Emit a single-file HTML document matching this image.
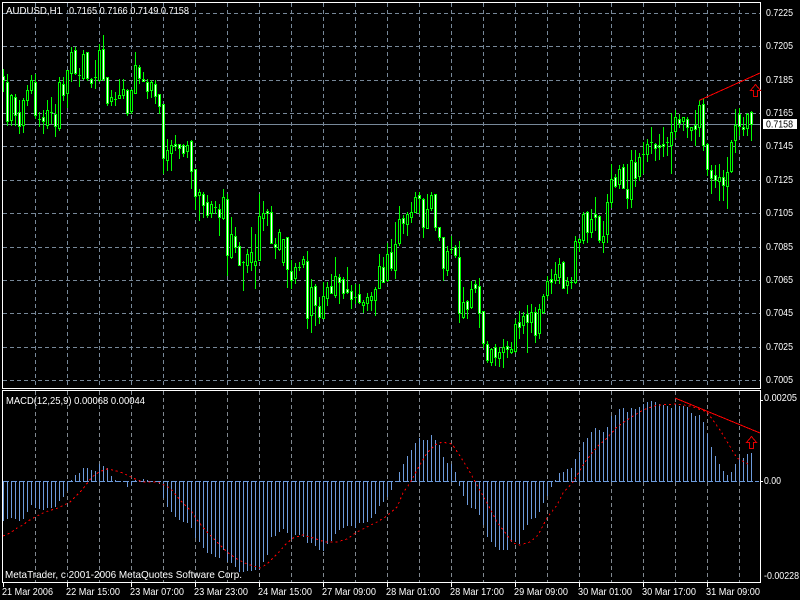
<!DOCTYPE html>
<html><head><meta charset="utf-8"><title>AUDUSD,H1</title>
<style>
html,body{margin:0;padding:0;background:#000;width:800px;height:600px;overflow:hidden}
svg{display:block}
text{font-family:"Liberation Sans",sans-serif;font-size:10.5px;fill:#fff}
</style></head><body>
<svg width="800" height="600" viewBox="0 0 800 600" xmlns="http://www.w3.org/2000/svg">
<rect width="800" height="600" fill="#000"/>
<g shape-rendering="crispEdges" fill="none">
<g stroke="#778899" stroke-dasharray="4 3">
<path transform="translate(0,.5)" d="M3 13H760M3 46H760M3 80H760M3 113H760M3 146H760M3 180H760M3 213H760M3 247H760M3 280H760M3 313H760M3 347H760M3 380H760"/>
<path transform="translate(.5,0)" d="M35 3V388M67 3V388M99 3V388M131 3V388M163 3V388M195 3V388M227 3V388M259 3V388M291 3V388M323 3V388M355 3V388M387 3V388M419 3V388M451 3V388M483 3V388M515 3V388M547 3V388M579 3V388M611 3V388M643 3V388M675 3V388M707 3V388M739 3V388"/>
<path transform="translate(.5,0)" stroke="#808890" d="M35 391V582M67 391V582M99 391V582M131 391V582M163 391V582M195 391V582M227 391V582M259 391V582M291 391V582M323 391V582M355 391V582M387 391V582M419 391V582M451 391V582M483 391V582M515 391V582M547 391V582M579 391V582M611 391V582M643 391V582M675 391V582M707 391V582M739 391V582"/>
</g>
<path transform="translate(0,.5)" stroke="#778899" d="M3 124H760"/>
<g transform="translate(.5,0)">
<path stroke="#00ff00" d="M3 69V92M7 74V126M11 94V126M15 94V126M19 100V134M23 98V133M27 85V106M31 75V94M35 74V119M39 112V127M43 110V134M47 100V129M51 97V124M55 104V137M59 77V131M63 77V101M67 70V108M71 47V82M75 47V75M79 68V87M83 50V80M87 52V81M91 78V88M95 60V89M99 44V82M103 35V81M107 77V106M111 90V106M115 92V106M119 79V99M123 79V99M127 89V116M131 89V114M135 52V94M139 65V84M143 72V82M147 79V99M151 80V98M155 80V104M159 94V114M163 104V174M167 139V171M171 140V171M175 135V151M179 144V159M183 144V157M187 141V158M191 140V189M195 169V210M199 189V221M203 192V218M207 195V218M211 201V218M215 201V214M219 204V236M223 189V220M227 194V276M231 217V259M235 227V253M239 242V266M243 261V291M247 249V273M251 227V271M255 234V289M259 194V261M263 201V231M267 209V226M271 206V244M275 238V259M279 229V251M283 239V266M287 237V288M291 260V289M295 263V284M299 262V271M303 256V268M307 251V329M311 279V333M315 284V326M319 297V324M323 282V319M327 282V306M331 274V294M335 257V298M339 274V304M343 277V299M347 267V294M351 285V309M355 284V304M359 284V304M363 300V313M367 293V311M371 292V311M375 287V316M379 254V289M383 257V283M387 243V282M391 239V271M395 222V279M399 206V246M403 215V234M407 212V236M411 202V223M415 192V213M419 192V214M423 198V238M427 194V229M431 192V211M435 194V231M439 227V241M443 237V281M447 246V276M451 236V254M455 245V258M459 241V323M463 287V319M467 300V319M471 281V309M475 280V293M479 278V328M483 311V348M487 341V363M491 348V366M495 344V366M499 347V367M503 339V368M507 341V358M511 342V354M515 319V353M519 311V339M523 312V334M527 305V353M531 304V333M535 307V343M539 304V339M543 294V314M547 276V299M551 269V294M555 262V284M559 258V284M563 261V289M567 277V294M571 277V289M575 236V284M579 238V252M583 212V244M587 211V243M591 209V238M595 197V231M599 215V243M603 221V253M607 194V243M611 164V208M615 174V188M619 165V189M623 164V189M627 164V209M631 150V208M635 150V187M639 153V181M643 142V174M647 139V162M651 127V154M655 143V161M659 134V160M663 127V157M667 137V156M671 113V174M675 110V138M679 114V128M683 117V131M687 117V138M691 127V141M695 110V146M699 100V137M703 98V151M707 143V176M711 165V194M715 165V188M719 164V201M723 170V201M727 157V209M731 140V173M735 109V153M739 108V136M743 117V136M747 113V136M751 111V141"/>
<path stroke="#00ff00" stroke-width="3" d="M3 76V81M7 82V122M11 95V121M15 97V116M19 112V127M23 100V126M27 90V101M31 80V91M35 82V116M39 119V120M43 117V122M47 110V126M51 112V113M55 114V127M59 82V129M63 84V96M67 70V94M71 52V74M75 50V74M79 75V76M83 54V79M87 52V79M91 79V84M95 77V78M99 50V81M103 49V80M107 77V104M111 97V102M115 99V100M119 95V99M123 89V96M127 90V114M131 90V112M135 65V94M139 67V79M143 79V82M147 82V92M151 82V91M155 84V97M159 94V107M163 104V159M167 150V161M171 145V154M175 144V147M179 144V149M183 145V154M187 145V152M191 141V172M195 169V197M199 192V196M203 194V206M207 202V216M211 204V214M215 207V208M219 209V218M223 197V219M227 199V256M231 234V258M235 236V248M239 246V266M243 262V263M247 254V266M251 252V263M255 261V266M259 216V261M263 213V219M267 211V214M271 212V244M275 244V248M279 232V250M283 239V263M287 237V270M291 271V281M295 267V279M299 267V268M303 259V265M307 261V319M311 287V316M315 286V306M319 306V318M323 296V319M327 287V299M331 286V294M335 276V296M339 277V283M343 279V294M347 289V293M351 291V300M355 297V298M359 294V303M363 302V306M367 297V304M371 296V301M375 289V301M379 266V289M383 267V283M387 254V281M391 252V269M395 244V271M399 219V244M403 218V224M407 214V225M411 212V218M415 197V213M419 195V199M423 199V228M427 209V229M431 195V209M435 194V228M439 227V238M443 237V269M447 251V271M451 249V250M455 247V256M459 257V314M463 302V318M467 301V310M471 289V308M475 284V289M479 286V314M483 311V344M487 344V361M491 349V363M495 347V358M499 352V359M503 347V353M507 346V350M511 349V353M515 324V352M519 322V328M523 316V326M527 314V323M531 312V323M535 312V336M539 309V334M543 296V313M547 281V296M551 279V283M555 274V281M559 264V278M563 262V289M567 281V286M571 282V283M575 241V283M579 239V243M583 214V241M587 212V233M591 219V233M595 214V218M599 216V241M603 236V243M607 202V235M611 179V203M615 177V187M619 169V185M623 167V189M627 189V199M631 160V200M635 162V179M639 157V177M643 154V155M647 144V155M651 142V143M655 144V149M659 145V148M663 144V147M667 142V143M671 132V146M675 117V132M679 119V124M683 117V122M687 119V128M691 127V131M695 125V130M699 105V128M703 104V146M707 144V170M711 170V179M715 175V181M719 177V182M723 177V186M727 172V187M731 142V172M735 125V141M739 114V127M743 127V130M747 114V129M751 112V125"/>
<path stroke="#000" d="M11 96V120M23 101V125M27 91V100M31 81V90M47 111V125M59 83V128M67 71V93M71 53V73M83 55V78M99 51V80M111 98V101M119 96V98M123 90V95M131 91V111M135 66V93M151 83V90M167 151V160M171 146V153M187 146V151M199 193V195M211 205V213M223 198V218M231 235V257M247 255V265M251 253V262M255 262V265M259 217V260M263 214V218M279 233V249M283 240V262M295 268V278M303 260V264M311 288V315M323 297V318M327 288V298M335 277V295M363 303V305M367 298V303M371 297V300M375 290V300M379 267V288M387 255V280M395 245V270M399 220V243M407 215V224M411 213V217M415 198V212M427 210V228M431 196V208M447 252V270M463 303V317M471 290V307M491 350V362M499 353V358M503 348V352M511 350V352M515 325V351M523 317V325M531 313V322M539 310V333M543 297V312M547 282V295M555 275V280M559 265V277M567 282V285M575 242V282M579 240V242M583 215V240M591 220V232M603 237V242M607 203V234M611 180V202M619 170V184M631 161V199M639 158V176M647 145V154M671 133V145M675 118V131M683 118V121M691 128V130M699 106V127M719 178V181M727 173V186M731 143V171M735 126V140M747 115V128"/>
<path stroke="#fff" d="M3 77V80M7 83V121M15 98V115M19 113V126M35 83V115M43 118V121M55 115V126M63 85V95M75 51V73M87 53V78M91 80V83M103 50V79M107 78V103M127 91V113M139 68V78M143 80V81M147 83V91M155 85V96M159 95V106M163 105V158M175 145V146M179 145V148M183 146V153M191 142V171M195 170V196M203 195V205M207 203V215M219 210V217M227 200V255M235 237V247M239 247V265M267 212V213M271 213V243M275 245V247M287 238V269M291 272V280M307 262V318M315 287V305M319 307V317M331 287V293M339 278V282M343 280V293M347 290V292M351 292V299M359 295V302M383 268V282M391 253V268M403 219V223M419 196V198M423 200V227M435 195V227M439 228V237M443 238V268M455 248V255M459 258V313M467 302V309M475 285V288M479 287V313M483 312V343M487 345V360M495 348V357M507 347V349M519 323V327M527 315V322M535 313V335M551 280V282M563 263V288M587 213V232M595 215V217M599 217V240M615 178V186M623 168V188M627 190V198M635 163V178M655 145V148M659 146V147M663 145V146M679 120V123M687 120V127M695 126V129M703 105V145M707 145V169M711 171V178M715 176V180M723 178V185M739 115V126M743 128V129M751 113V124"/>
<path stroke="#6d9bdc" d="M3 481V521M7 481V519M11 481V518M15 481V519M19 481V521M23 481V519M27 481V512M31 481V505M35 481V508M39 481V509M43 481V510M47 481V508M51 481V508M55 481V507M59 481V501M63 481V497M67 481V491M71 480V481M75 475V481M79 473V481M83 468V481M87 468V481M91 470V481M95 471V481M99 464V481M103 466V481M107 468V481M111 476V481M115 480V481M127 481V487M131 481V485M135 480V481M139 480V481M143 479V481M147 480V481M159 481V484M163 481V498M167 481V507M171 481V512M175 481V517M179 481V520M183 481V522M187 481V523M191 481V528M195 481V538M199 481V542M203 481V548M207 481V553M211 481V554M215 481V557M219 481V558M223 481V550M227 481V562M231 481V563M235 481V567M239 481V572M243 481V572M247 481V571M251 481V571M255 481V570M259 481V570M263 481V562M267 481V555M271 481V537M275 481V536M279 481V532M283 481V529M287 481V533M291 481V539M295 481V535M299 481V535M303 481V537M307 481V543M311 481V543M315 481V546M319 481V550M323 481V551M327 481V544M331 481V541M335 481V534M339 481V530M343 481V528M347 481V526M351 481V526M355 481V528M359 481V523M363 481V523M367 481V522M371 481V518M375 481V514M379 481V506M383 481V502M387 481V497M391 481V490M395 481V482M399 472V481M403 464V481M407 456V481M411 450V481M415 443V481M419 438V481M423 440V481M427 440V481M431 435V481M435 440V481M439 445V481M443 457V481M447 463V481M451 464V481M455 472V481M459 481V486M463 481V496M467 481V505M471 481V508M475 481V509M479 481V515M483 481V525M487 481V537M491 481V542M495 481V547M499 481V550M503 481V550M507 481V550M511 481V542M515 481V542M519 481V544M523 481V530M527 481V525M531 481V519M535 481V518M539 481V512M543 481V503M547 481V496M551 481V487M555 480V481M559 473V481M563 472V481M567 469V481M571 468V481M575 459V481M579 452V481M583 442V481M587 438V481M591 432V481M595 428V481M599 430V481M603 432V481M607 427V481M611 416V481M615 415V481M619 409V481M623 408V481M627 412V481M631 408V481M635 409V481M639 407V481M643 404V481M647 402V481M651 401V481M655 402V481M659 404V481M663 405V481M667 406V481M671 408V481M675 404V481M679 406V481M683 406V481M687 407V481M691 413V481M695 416V481M699 415V481M703 422V481M707 434V481M711 447V481M715 456V481M719 464V481M723 471V481M727 475V481M731 472V481M735 464V481M739 458V481M743 458V481M747 454V481M751 453V481"/>
</g>
<path transform="translate(0,.5)" stroke="#6d9bdc" stroke-dasharray="6 2" d="M3 481H759"/>
<path stroke="#fff" d="M2.5 2V389M760.5 2V389M2 2.5H761M2 388.5H761M2.5 390V583M760.5 390V583M2 390.5H761M2 582.5H761"/>
<path stroke="#fff" d="M3.5 583V587M67.5 583V587M131.5 583V587M195.5 583V587M259.5 583V587M323.5 583V587M387.5 583V587M451.5 583V587M515.5 583V587M579.5 583V587M643.5 583V587M707.5 583V587M761 481.5H763M761 400.5H763"/>
<rect x="763" y="119" width="34" height="10" fill="#fff"/>
</g>
<g fill="none" stroke="#ff0000" shape-rendering="crispEdges">
<path stroke-dasharray="2 3" d="M3 536L10 533L17 528L23 525L28 521L37 516L45 512L58 508L70 502L82 490L92 477L99 472L107 469L113 470L123 473L133 478L142 482L158 482L170 488L182 502L192 512L197 520L207 532L217 542L227 552L237 559L247 564L260 568L267 564L277 554L287 543L293 538L303 535L313 538L325 542L337 542L347 539L357 532L367 527L377 522L387 516L397 507L403 493L410 483L417 470L427 453L435 445L442 442L452 444L458 453L467 467L477 485L487 503L497 522L507 535L513 543L520 545L530 542L538 535L547 518L557 505L563 493L573 482L585 462L597 447L607 438L617 427L630 418L643 410L657 405L677 404L690 406L707 412L720 430L737 458L748 464"/>
<path d="M699 100.5L760 73"/>
<path d="M675 398L760 433"/>
<path stroke="#e00000" d="M755.5 84.5L760.5 90.5H757.5V96.5H753.5V90.5H750.5Z"/>
<path stroke="#e00000" d="M751.5 436.5L756.5 442.5H753.5V448.5H749.5V442.5H746.5Z"/>
</g>
<text x="6" y="14" textLength="56" lengthAdjust="spacingAndGlyphs">AUDUSD,H1</text>
<text x="69" y="14" textLength="120" lengthAdjust="spacingAndGlyphs">0.7165 0.7166 0.7149 0.7158</text>
<text x="766" y="16" textLength="27" lengthAdjust="spacingAndGlyphs">0.7225</text>
<text x="766" y="49" textLength="27" lengthAdjust="spacingAndGlyphs">0.7205</text>
<text x="766" y="83" textLength="27" lengthAdjust="spacingAndGlyphs">0.7185</text>
<text x="766" y="116" textLength="27" lengthAdjust="spacingAndGlyphs">0.7165</text>
<text x="766" y="149" textLength="27" lengthAdjust="spacingAndGlyphs">0.7145</text>
<text x="766" y="183" textLength="27" lengthAdjust="spacingAndGlyphs">0.7125</text>
<text x="766" y="216" textLength="27" lengthAdjust="spacingAndGlyphs">0.7105</text>
<text x="766" y="250" textLength="27" lengthAdjust="spacingAndGlyphs">0.7085</text>
<text x="766" y="283" textLength="27" lengthAdjust="spacingAndGlyphs">0.7065</text>
<text x="766" y="316" textLength="27" lengthAdjust="spacingAndGlyphs">0.7045</text>
<text x="766" y="350" textLength="27" lengthAdjust="spacingAndGlyphs">0.7025</text>
<text x="766" y="383" textLength="27" lengthAdjust="spacingAndGlyphs">0.7005</text>
<text x="766" y="127.5" textLength="27" lengthAdjust="spacingAndGlyphs" style="fill:#000">0.7158</text>
<text x="6" y="404" textLength="139" lengthAdjust="spacingAndGlyphs">MACD(12,25,9) 0.00068 0.00044</text>
<text x="5" y="578" textLength="237" lengthAdjust="spacingAndGlyphs">MetaTrader, c 2001-2006 MetaQuotes Software Corp.</text>
<text x="764" y="401" textLength="33" lengthAdjust="spacingAndGlyphs">0.00205</text>
<text x="764" y="484" textLength="17" lengthAdjust="spacingAndGlyphs">0.00</text>
<text x="764" y="579" textLength="35" lengthAdjust="spacingAndGlyphs">-0.00228</text>
<text x="2" y="595" textLength="51" lengthAdjust="spacingAndGlyphs">21 Mar 2006</text>
<text x="66" y="595" textLength="54" lengthAdjust="spacingAndGlyphs">22 Mar 15:00</text>
<text x="130" y="595" textLength="54" lengthAdjust="spacingAndGlyphs">23 Mar 07:00</text>
<text x="194" y="595" textLength="54" lengthAdjust="spacingAndGlyphs">23 Mar 23:00</text>
<text x="258" y="595" textLength="54" lengthAdjust="spacingAndGlyphs">24 Mar 15:00</text>
<text x="322" y="595" textLength="54" lengthAdjust="spacingAndGlyphs">27 Mar 09:00</text>
<text x="386" y="595" textLength="54" lengthAdjust="spacingAndGlyphs">28 Mar 01:00</text>
<text x="450" y="595" textLength="54" lengthAdjust="spacingAndGlyphs">28 Mar 17:00</text>
<text x="514" y="595" textLength="54" lengthAdjust="spacingAndGlyphs">29 Mar 09:00</text>
<text x="578" y="595" textLength="54" lengthAdjust="spacingAndGlyphs">30 Mar 01:00</text>
<text x="642" y="595" textLength="54" lengthAdjust="spacingAndGlyphs">30 Mar 17:00</text>
<text x="706" y="595" textLength="54" lengthAdjust="spacingAndGlyphs">31 Mar 09:00</text>
</svg>
</body></html>
